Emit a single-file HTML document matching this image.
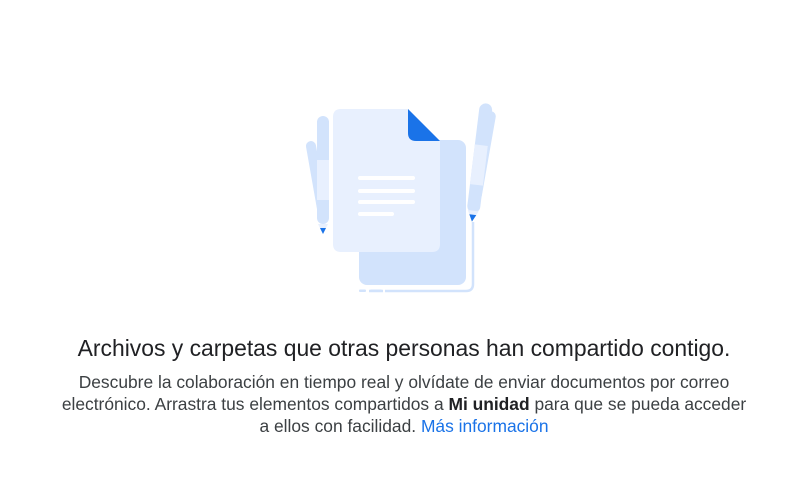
<!DOCTYPE html>
<html><head><style>
html,body{margin:0;width:808px;height:500px;background:#fff;overflow:hidden}
.h{position:absolute;left:0;width:808px;top:335px;text-align:center;font:22.9px "Liberation Sans",sans-serif;color:#202124;white-space:nowrap}
.b{position:absolute;left:57px;width:694px;top:371px;text-align:center;font:17.4px/22px "Liberation Sans",sans-serif;color:#3c4043}
.b b{color:#202124}
.b span{color:#1a73e8}
</style></head><body>
<svg width="808" height="320" style="position:absolute;left:0;top:0">
<g transform="rotate(-10 320 180)"><rect x="312" y="140" width="10" height="80" rx="5" fill="#d2e3fc"/></g>
<rect x="317" y="116" width="12" height="108" rx="6" fill="#d2e3fc"/>
<rect x="317" y="160" width="12" height="40" fill="#e8f0fe"/>
<polygon points="318,224 328,224 323,234" fill="#e8f0fe"/>
<polygon points="320,228 326,228 323,234" fill="#1a73e8"/>
<g transform="rotate(10 480 160)"><rect x="478" y="110" width="10" height="90" rx="5" fill="#d2e3fc"/></g>
<g transform="rotate(7 479 160)">
<rect x="473" y="103" width="13" height="110" rx="6.5" fill="#d2e3fc"/>
<rect x="473" y="145" width="13" height="40" fill="#e8f0fe"/>
<polygon points="474,211 485,211 479.5,222" fill="#e8f0fe"/>
<polygon points="476,215 483,215 479.5,222" fill="#1a73e8"/>
</g>
<path d="M359 291 H466 Q473 291 473 284 V222" stroke="#d2e3fc" stroke-width="2.5" fill="none"/>
<rect x="359" y="289" width="10" height="4" fill="#fff"/>
<rect x="359" y="289.5" width="7" height="2.5" rx="1" fill="#d2e3fc"/>
<rect x="370" y="289.5" width="12" height="2.5" rx="1" fill="#d2e3fc"/>
<rect x="383" y="289" width="2" height="4" fill="#fff"/>
<rect x="359" y="140" width="107" height="145" rx="8" fill="#d2e3fc"/>
<path d="M341 109 H408 L440 141 V244 Q440 252 432 252 H341 Q333 252 333 244 V117 Q333 109 341 109Z" fill="#e8f0fe"/>
<path d="M408 109 L440 141 H416 Q408 141 408 133Z" fill="#1a73e8"/>
<g stroke="#fff" stroke-width="4" stroke-linecap="round">
<line x1="360" y1="178" x2="413" y2="178"/>
<line x1="360" y1="191" x2="413" y2="191"/>
<line x1="360" y1="202" x2="413" y2="202"/>
<line x1="360" y1="214" x2="392" y2="214"/>
</g>
</svg>
<div class="h">Archivos y carpetas que otras personas han compartido contigo.</div>
<div class="b">Descubre la colaboración en tiempo real y olvídate de enviar documentos por correo electrónico. Arrastra tus elementos compartidos a <b>Mi unidad</b> para que se pueda acceder a ellos con facilidad. <span>Más información</span></div>
</body></html>
